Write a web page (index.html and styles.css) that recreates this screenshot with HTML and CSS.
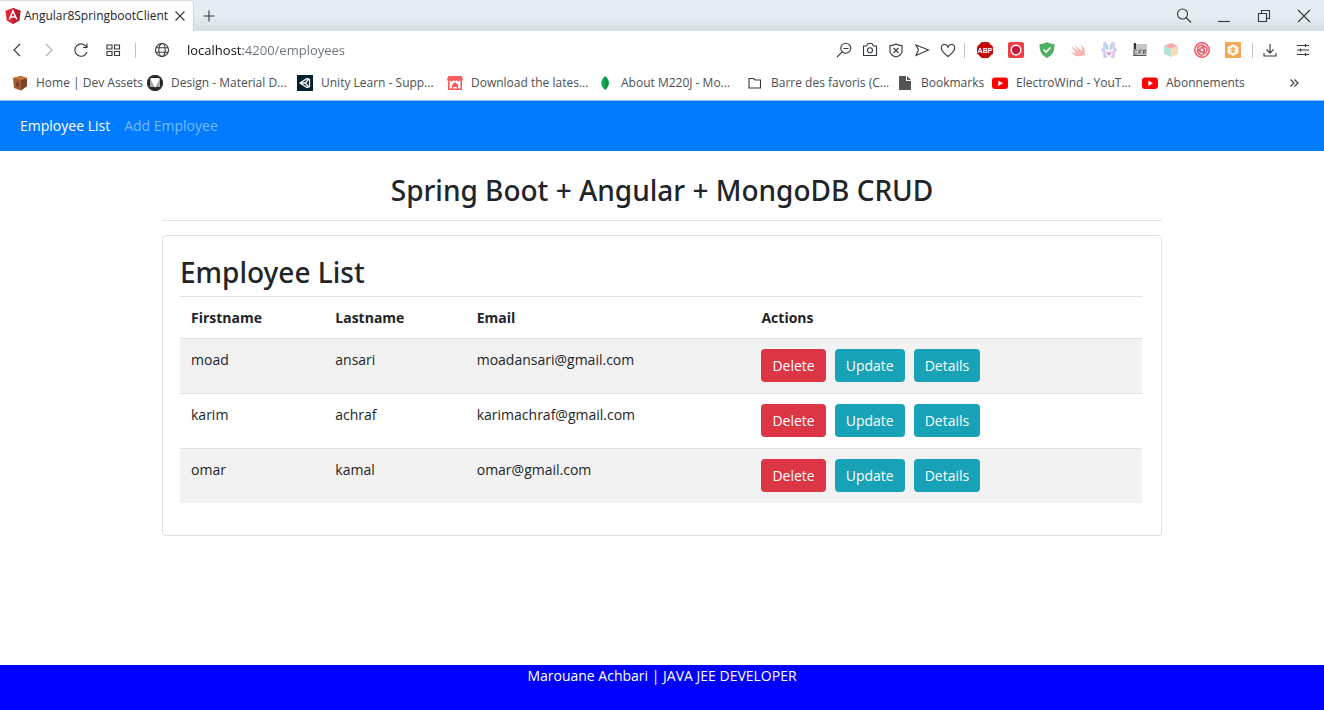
FILE: index.html
```html
<!DOCTYPE html>
<html lang="en">
<head>
<meta charset="utf-8">
<title>Angular8SpringbootClient</title>
<link rel="stylesheet" href="styles.css">
</head>
<body>
<div class="browser">
  <div class="tabbar">
    <div class="tab">
      <svg class="ic" viewBox="0 0 16 16"><path d="M8 0l7.500 2.700-1.200 9.800L8 16l-6.300-3.500L.5 2.700z" fill="#dd2738"/><path d="M8 0l7.500 2.700-1.200 9.800L8 16z" fill="#b91c35"/><path d="M4.200 11.500L8 3l3.800 8.500M5.800 9h4.400" fill="none" stroke="#fff" stroke-width="1.500"/></svg>
      <span class="tab-title">Angular8SpringbootClient</span>
      <button class="tab-close" aria-label="Close tab"><svg class="ic line" viewBox="0 0 16 16"><path d="M3.500 3.500l9 9M12.500 3.500l-9 9"/></svg></button>
    </div>
    <button class="new-tab" aria-label="New tab"><svg class="ic line" viewBox="0 0 16 16"><path d="M8 2.500v11M2.500 8h11"/></svg></button>
    <div class="window-buttons">
      <button class="win" aria-label="Search tabs"><svg class="ic line" viewBox="0 0 16 16"><circle cx="6.500" cy="6" r="5"/><path d="M10 9.500l5 5"/></svg></button>
      <button class="win" aria-label="Minimize"><svg class="ic line" viewBox="0 0 16 16"><path d="M2 13.500h12"/></svg></button>
      <button class="win" aria-label="Restore"><svg class="ic line" viewBox="0 0 16 16"><path d="M5.500 5.500v-3h8v8h-3M2.500 5.500h8v8h-8z"/></svg></button>
      <button class="win" aria-label="Close"><svg class="ic line" viewBox="0 0 16 16"><path d="M2 2l12 12M14 2L2 14"/></svg></button>
    </div>
  </div>

  <div class="toolbar">
    <button class="nav-btn" aria-label="Back"><svg class="ic line" viewBox="0 0 16 16"><path d="M11 2L5 8l6 6"/></svg></button>
    <button class="nav-btn faded" aria-label="Forward"><svg class="ic line" viewBox="0 0 16 16"><path d="M5 2l6 6-6 6"/></svg></button>
    <button class="nav-btn" aria-label="Reload"><svg class="ic line" viewBox="0 0 16 16"><path d="M13.500 5A6.200 6.200 0 1 0 14 10M14 1.500v4h-4"/></svg></button>
    <button class="nav-btn" aria-label="Speed dial"><svg class="ic line" viewBox="0 0 16 16"><path d="M2 3h5v4H2zM9.500 3h5v4h-5zM2 9.500h5v4H2zM9.500 9.500h5v4h-5z"/></svg></button>
    <span class="sep sep-nav"></span>
    <button class="site" aria-label="Site information"><svg class="ic line" viewBox="0 0 16 16"><circle cx="8" cy="8" r="6.500"/><ellipse cx="8" cy="8" rx="3.200" ry="6.500"/><path d="M2 5.700h12M2 10.300h12"/></svg></button>
    <input class="address" type="text" aria-label="Address" value="localhost:4200/employees" spellcheck="false">
    <div class="page-tools">
      <button aria-label="Zoom out"><svg class="ic line" viewBox="0 0 16 16"><circle cx="9.800" cy="6.200" r="5"/><path d="M6.200 9.800L1 15M7.500 6.500h5"/></svg></button>
      <button aria-label="Snapshot"><svg class="ic line" viewBox="0 0 16 16"><path d="M1.500 4h3l1.500-2.500h4L11.500 4h3v9.500h-13z"/><circle cx="8" cy="8.300" r="2.500"/></svg></button>
      <button aria-label="Blocker"><svg class="ic line" viewBox="0 0 16 16"><path d="M8 2c2 1.300 4 1.500 6 1.500V9c0 3-2.500 5-6 6-3.500-1-6-3-6-6V3.500C4 3.500 6 3.300 8 2zM5.500 6l5 5M10.500 6l-5 5"/></svg></button>
      <button aria-label="Send to flow"><svg class="ic line" viewBox="0 0 16 16"><path d="M2 3l12.500 5L2 13.500 4.500 8z"/></svg></button>
      <button aria-label="Bookmark page"><svg class="ic line" viewBox="0 0 16 16"><path d="M8 14.500C4 11.500 1.300 9 1.300 6c0-4.500 5.500-4.500 6.700-1 1.200-3.500 6.700-3.500 6.700 1 0 3-2.700 5.500-6.700 8.500z"/></svg></button>
    </div>
    <span class="sep"></span>
    <div class="extensions">
      <button aria-label="Adblock Plus"><svg class="ic" viewBox="0 0 16 16"><path d="M4.700 0h6.600L16 4.700v6.600L11.300 16H4.700L0 11.300V4.700z" fill="#c20a0a"/><text class="abp" x="8" y="10.500">ABP</text></svg></button>
      <button aria-label="Recorder"><svg class="ic" viewBox="0 0 16 16"><rect width="16" height="16" rx="2" fill="#ef3e46"/><circle cx="8" cy="8" r="4.800" fill="#c4173f" stroke="#fff" stroke-width="1.400"/></svg></button>
      <button aria-label="Shield"><svg class="ic" viewBox="0 0 16 16"><path d="M8 0c2.500 1.500 5 2 7.500 2 0 7-1.500 11-7.500 14C2 13 .5 9 .5 2 3 2 5.500 1.500 8 0z" fill="#4caf63"/><path d="M4.500 7.500L7 10l4.500-4.500" fill="none" stroke="#fff" stroke-width="1.600"/></svg></button>
      <button aria-label="Swift"><svg class="ic" viewBox="0 0 16 16"><path d="M1 4l8 5.500L4 3l8 6c.5-2 0-4-1-6 3 2 4.500 5 3.500 8l1 3c-1.500-1.500-3-.5-5 0C6.500 15 3 13 .5 9.500c2 1.500 4 2 5.500 1.500z" fill="#f5b5ae"/></svg></button>
      <button aria-label="Code helper"><svg class="ic" viewBox="0 0 16 16"><path d="M6 1.500H3.500V6L1.500 8l2 2v4.500H6M10 1.500h2.500V6l2 2-2 2v4.500H10" fill="none" stroke="#cfc8f3" stroke-width="2.500"/><path d="M5 2h6v12H5z" fill="#eef1fb"/><rect x="5" y="2.500" width="2" height="5" fill="#a9dcd0"/><rect x="9" y="2.500" width="2" height="5" fill="#a9dcd0"/><path d="M8 13.500L5.500 11l1-1L8 11l1.500-1 1 1z" fill="#f08d9d"/></svg></button>
      <button aria-label="CFR"><svg class="ic" viewBox="0 0 16 16"><path d="M1 2h14v12H1z" fill="#c7c7c7"/><path d="M3 1v6" stroke="#333" stroke-width="2"/><path d="M1 13.500h13" stroke="#555"/><path d="M5 8H2v4h3M7 12V8h3M7 10h2.500M11.500 12V8h2v2h-2l2 2" fill="none" stroke="#666"/></svg></button>
      <button aria-label="Cube"><svg class="ic" viewBox="0 0 16 16"><path d="M8 1l7 3-7 3-7-3z" fill="#f5a8af"/><path d="M1 4l7 3v8l-7-3z" fill="#b2e5cf"/><path d="M15 4L8 7v8l7-3z" fill="#f6dbb6"/></svg></button>
      <button aria-label="Spiral"><svg class="ic" viewBox="0 0 16 16"><g fill="none" stroke="#ee5564" stroke-width="1.500"><circle cx="8" cy="8" r="7.200"/><path id="arm" d="M8 5.800c1.500-2 5-1.500 5 1.700 0 2-1 3.500-2.500 4.500"/><use href="#arm" transform="rotate(120 8 8)"/><use href="#arm" transform="rotate(240 8 8)"/><circle cx="8" cy="8" r="2.200"/></g></svg></button>
      <button aria-label="Hexagon"><svg class="ic" viewBox="0 0 16 16"><rect width="16" height="16" fill="#f5a652"/><path d="M8 2l5.500 3v6L8 14l-5.500-3V5z" fill="#fff5e5"/><path d="M8 5v6M5.500 6.500l5 3M10.500 6.500l-5 3" stroke="#f5a652" stroke-width="1.400"/></svg></button>
    </div>
    <span class="sep"></span>
    <button class="end-btn" aria-label="Downloads"><svg class="ic line" viewBox="0 0 16 16"><path d="M8 2v9M4.500 7.500L8 11l3.500-3.500M2 11v3h12v-3"/></svg></button>
    <button class="end-btn" aria-label="Easy setup"><svg class="ic line" viewBox="0 0 16 16"><path d="M2 3.500h12M2 8h12M2 12.500h12M10.500 2v3M5.500 6.500v3M10.500 11v3"/></svg></button>
  </div>

  <nav class="bookmarks" aria-label="Bookmarks">
    <a class="bm bm-home" href="#"><svg class="ic" viewBox="0 0 16 16"><path d="M1 3l8-2 6 2v8l-6 4.500L2 13z" fill="#a65a2e"/><path d="M9 5l6-2v8l-6 4.500z" fill="#7c452a"/><path d="M1 3l8-2 6 2-6 2z" fill="#c7743a"/><path d="M4 7l3 1v4l-3-1z" fill="#6f4030"/></svg><span>Home | Dev Assets</span></a>
    <a class="bm" href="#"><svg class="ic" viewBox="0 0 16 16"><circle cx="8" cy="8" r="8" fill="#222"/><path d="M3 3h10v9H3z" fill="#aaa"/><path d="M3 3l5 10 5-10z" fill="#fff"/><circle cx="8" cy="8" r="7.200" fill="none" stroke="#333" stroke-width="1.500"/></svg><span>Design - Material D...</span></a>
    <a class="bm" href="#"><svg class="ic" viewBox="0 0 16 16"><path d="M0 0h16v16H0z" fill="#04222c"/><path d="M3 8l7-4.500 2.500 1v7L10 12.500zM3 8h5.500l3-4M8.500 8l3 4" fill="none" stroke="#fff" stroke-width="1.300"/></svg><span>Unity Learn - Supp...</span></a>
    <a class="bm" href="#"><svg class="ic" viewBox="0 0 16 16"><path d="M1.500 1h13L16 4c0 2-2 2.500-2.700 1.300-1 1.500-3 1.500-3.800 0-.8 1-2.200 1-3 0-.8 1.500-2.800 1.500-3.800 0C2 6.500 0 6 0 4z" fill="#fa5c5c"/><path d="M1.800 5v9.200h12.400V5" fill="none" stroke="#fa5c5c" stroke-width="1.600"/><path d="M8 7l3 3v2.500l1.500 2h-2L9.500 12h-3l-1 2.500h-2l1.500-2V10z" fill="#fa5c5c"/></svg><span>Download the lates...</span></a>
    <a class="bm" href="#"><svg class="ic" viewBox="0 0 16 16"><path d="M8 1c5 5 5 9 0 14-5-5-5-9 0-14z" fill="#13aa52"/><path d="M8 1c5 5 5 9 0 14z" fill="#10914a"/></svg><span>About M220J - Mo...</span></a>
    <a class="bm" href="#"><svg class="ic line" viewBox="0 0 16 16"><path d="M2 3.500h4.500L8 5h5.500v8H2z"/></svg><span>Barre des favoris (C...</span></a>
    <a class="bm bm-short" href="#"><svg class="ic" viewBox="0 0 16 16"><path d="M2 1h7v5h5v9H2zM10 1l4 4h-4z" fill="#555"/></svg><span>Bookmarks</span></a>
    <a class="bm" href="#"><svg class="ic" viewBox="0 0 16 16"><rect y="2.500" width="16" height="11.500" rx="3" fill="#f00"/><path d="M6.300 5.500v5.500L11 8.200z" fill="#fff"/></svg><span>ElectroWind - YouT...</span></a>
    <a class="bm bm-last" href="#"><svg class="ic" viewBox="0 0 16 16"><rect y="2.500" width="16" height="11.500" rx="3" fill="#f00"/><path d="M6.300 5.500v5.500L11 8.200z" fill="#fff"/></svg><span>Abonnements</span></a>
    <button class="more" aria-label="More bookmarks"><svg class="ic line" viewBox="0 0 16 16"><path d="M4.500 4.500L8 8l-3.500 3.500M8.500 4.500L12 8l-3.500 3.500"/></svg></button>
  </nav>
</div>

<nav class="navbar" aria-label="Main">
  <a class="nav-link active" href="#">Employee List</a>
  <a class="nav-link" href="#">Add Employee</a>
</nav>

<main class="container">
  <h1 class="title">Spring Boot + Angular + MongoDB CRUD</h1>
  <hr class="rule">
  <section class="card">
    <h2 class="card-title">Employee List</h2>
    <table class="table">
      <colgroup><col class="c-first"><col class="c-last"><col class="c-email"><col></colgroup>
      <thead>
        <tr><th>Firstname</th><th>Lastname</th><th>Email</th><th>Actions</th></tr>
      </thead>
      <tbody>
        <tr><td>moad</td><td>ansari</td><td>moadansari@gmail.com</td><td><div class="actions"><button class="btn danger">Delete</button><button class="btn info">Update</button><button class="btn info">Details</button></div></td></tr>
        <tr><td>karim</td><td>achraf</td><td>karimachraf@gmail.com</td><td><div class="actions"><button class="btn danger">Delete</button><button class="btn info">Update</button><button class="btn info">Details</button></div></td></tr>
        <tr><td>omar</td><td>kamal</td><td>omar@gmail.com</td><td><div class="actions"><button class="btn danger">Delete</button><button class="btn info">Update</button><button class="btn info">Details</button></div></td></tr>
      </tbody>
    </table>
  </section>
</main>

<footer class="footer">Marouane Achbari | JAVA JEE DEVELOPER</footer>
</body>
</html>
```
FILE: styles.css
```css
* { box-sizing: border-box; }
body {
  margin: 0;
  min-height: 100vh;
  display: flex;
  flex-direction: column;
  background: #fff;
  color: #212529;
  font: 14px/22px "Open Sans", "Noto Sans", sans-serif;
}
button {
  padding: 0;
  border: 0;
  background: none;
  font: inherit;
  color: inherit;
}
a { text-decoration: none; color: inherit; }

.ic { display: block; flex: none; width: 16px; height: 16px; }
.line { fill: none; stroke: #33383d; stroke-width: 1.1; }
.abp {
  font: bold 7px "Liberation Sans", sans-serif;
  fill: #fff;
  text-anchor: middle;
}

/* Browser chrome */
.browser { border-bottom: 1px solid #8fc1f5; }
.tabbar {
  display: flex;
  height: 31px;
  background: linear-gradient(#e4ecf4 50%, #d5dde5);
}
.tab {
  display: flex;
  align-items: center;
  width: 194px;
  padding: 0 5px;
  gap: 3px;
  background: #fff;
  border-top: 1px solid #d5dde5;
  border-right: 1px solid #cdd5dd;
  border-top-right-radius: 3px;
}
.tab-title { flex: 1; font-size: 12px; white-space: nowrap; }
.new-tab { width: 30px; display: grid; place-items: center; }
.window-buttons { display: flex; margin-left: auto; }
.win { width: 40px; display: grid; place-items: center; }

.toolbar {
  display: flex;
  align-items: center;
  height: 38px;
  padding: 0 5px 0 1px;
}
.toolbar button { display: grid; place-items: center; height: 28px; }
.nav-btn { width: 32px; }
.faded { opacity: .4; }
.sep { width: 1px; height: 15px; background: #bfc4c9; }
.sep-nav { margin-left: 6px; }
.site { width: 51px; }
.address {
  flex: 1;
  min-width: 0;
  border: 0;
  padding: 0;
  outline: 0;
  font: 13px/20px "Open Sans", sans-serif;
  background: linear-gradient(90deg, #111 56px, #68717b 56px);
  -webkit-background-clip: text;
  background-clip: text;
  color: transparent;
}
.page-tools { display: flex; margin-right: 3px; }
.page-tools button { width: 26px; }
.extensions { display: flex; margin: 0 4px 0 4px; }
.extensions button { width: 31px; }
.end-btn { width: 33px; }

.bookmarks {
  display: flex;
  align-items: center;
  height: 31px;
  padding: 0 22px 3px 12px;
  font-size: 12px;
  line-height: 16px;
  color: #4b5055;
}
.bm {
  display: flex;
  align-items: center;
  gap: 8px;
  flex: none;
  width: 150px;
  white-space: nowrap;
}
.bm-home { width: 135px; }
.bm-short { width: 95px; }
.bm-last { width: 110px; }
.more { margin-left: auto; }

/* Application */
.navbar {
  display: flex;
  align-items: center;
  gap: 14px;
  height: 50px;
  padding: 0 20px;
  background: #007bff;
}
.nav-link { color: #75baff; }
.nav-link.active { color: #fff; }

.container {
  width: 100%;
  max-width: 1026px;
  margin: 0 auto;
  padding: 22px 13px;
}
.title, .card-title {
  margin: 0;
  font: 500 28px/35px "Noto Sans", "Open Sans", sans-serif;
}
.title { text-align: center; }
.rule { margin: 12px 0 14px; border: 0; border-top: 1px solid #e5e5e5; }
.card {
  padding: 19px 19px 32px 17px;
  border: 1px solid #dfdfdf;
  border-radius: 4px;
}
.table { width: 100%; margin-top: 6px; table-layout: fixed; border-collapse: collapse; }
.c-first { width: 15%; }
.c-last { width: 14.7%; }
.c-email { width: 29.6%; }
.table th, .table td {
  padding: 10px 11px;
  border-top: 1px solid #dee2e6;
  text-align: left;
  vertical-align: top;
}
.table th { font-weight: 700; padding-bottom: 9px; }
.table tbody tr:nth-child(odd) { background: #f2f2f2; }
.actions { display: flex; gap: 9px; padding-bottom: 1px; }
.btn {
  height: 33px;
  padding: 0 11px;
  border-radius: 4px;
  color: #fff;
}
.danger { background: #dc3545; }
.info { background: #17a2b8; }

.footer {
  height: 45px;
  margin-top: auto;
  background: #00f;
  color: #fff;
  text-align: center;
}
```
